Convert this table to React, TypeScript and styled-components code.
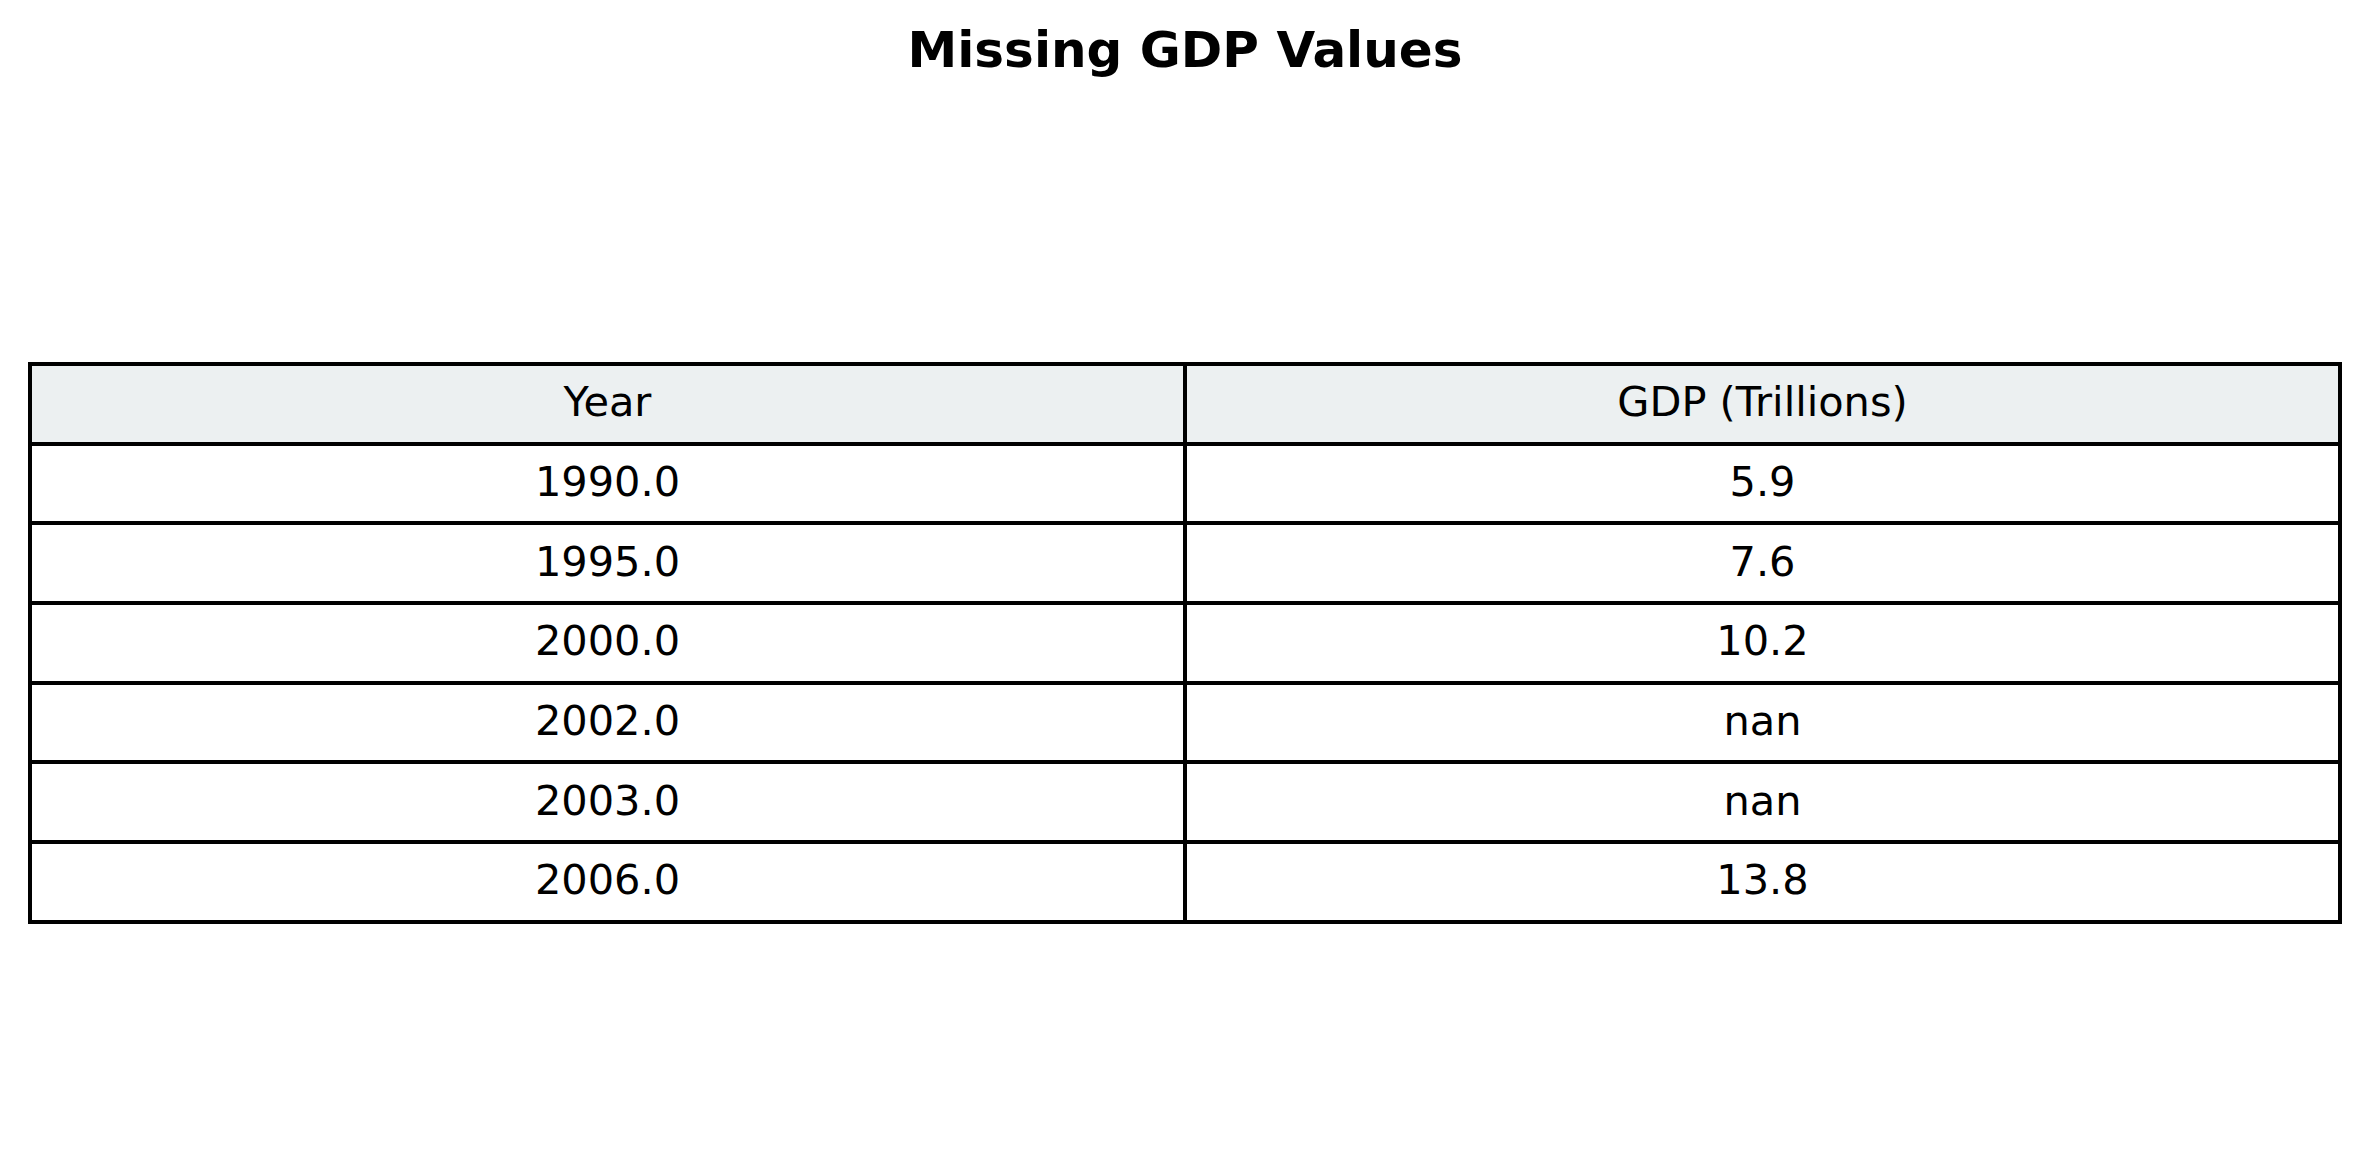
import { createGlobalStyle } from "styled-components";
import styled from "styled-components";

const GlobalStyle = createGlobalStyle`
  html,
  body {
    margin: 0;
    padding: 0;
    background: #ffffff;
  }

  body {
    font-family: "DejaVu Sans", "Liberation Sans", sans-serif;
    color: #000000;
  }
`;

const Page = styled.main`
  width: 2370px;
  height: 1166px;
  box-sizing: border-box;
  padding: 20px 28px 0;
`;

const Title = styled.h1`
  margin: 0;
  height: 60px;
  font-size: 50px;
  line-height: 60px;
  font-weight: 700;
  text-align: center;
`;

const Grid = styled.div`
  margin-top: 282px;
  display: grid;
  grid-template-columns: 1fr 1fr;
  border-top: 4px solid #000;
  border-left: 4px solid #000;
`;

const Cell = styled.div<{ $header?: boolean }>`
  box-sizing: border-box;
  height: 79.7px;
  padding-bottom: 4px;
  display: flex;
  align-items: center;
  justify-content: center;
  border-right: 4px solid #000;
  border-bottom: 4px solid #000;
  background: ${props => (props.$header ? "#ecf0f1" : "#ffffff")};
  font-size: 41.5px;
  line-height: normal;
`;

const columns = ["Year", "GDP (Trillions)"];

const rows: [string, string][] = [
  ["1990.0", "5.9"],
  ["1995.0", "7.6"],
  ["2000.0", "10.2"],
  ["2002.0", "nan"],
  ["2003.0", "nan"],
  ["2006.0", "13.8"]
];

export default function App() {
  return (
    <>
      <GlobalStyle />
      <Page>
        <Title>Missing GDP Values</Title>
        <Grid>
          {columns.map(name => (
            <Cell key={name} $header>
              {name}
            </Cell>
          ))}
          {rows.map(([year, gdp]) => [
            <Cell key={`${year}-y`}>{year}</Cell>,
            <Cell key={`${year}-g`}>{gdp}</Cell>
          ])}
        </Grid>
      </Page>
    </>
  );
}
